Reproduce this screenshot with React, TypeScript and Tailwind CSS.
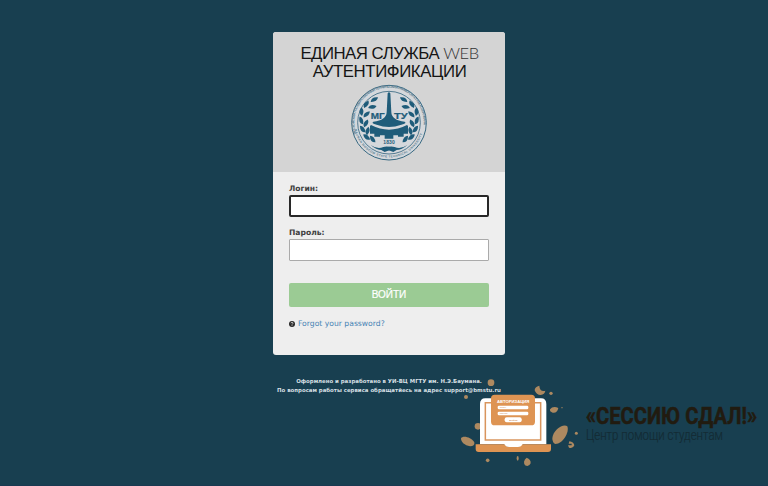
import React from "react";

const leaves: { x: number; y: number; r: number }[] = [
  { x: 103, y: 62, r: -32 },
  { x: 79, y: 76, r: -60 },
  { x: 97, y: 84, r: -15 },
  { x: 65, y: 98, r: -95 },
  { x: 80, y: 106, r: -45 },
  { x: 64, y: 124, r: -115 },
  { x: 78, y: 133, r: -65 },
  { x: 68, y: 150, r: -130 },
  { x: 83, y: 156, r: -80 },
  { x: 80, y: 174, r: -145 },
  { x: 98, y: 180, r: -130 },
];

function LaurelHalf() {
  return (
    <g fill="#1f5c7a">
      {leaves.map((l, i) => (
        <path key={i} d="M-13 0Q-3 -13 13 0Q3 11 -13 0Z" transform={`translate(${l.x} ${l.y}) rotate(${l.r})`} />
      ))}
      <path d="M92 198Q112 212 130 204Q147 198 170 213L160 219L138 211Q114 218 92 198Z" />
    </g>
  );
}

function Emblem() {
  return (
    <svg width="100" height="90" viewBox="0 0 300 270" className="block" fontFamily="Liberation Sans, sans-serif">
      <defs>
        <path id="ringTop" d="M49 165A104 104 0 1 1 245 165" />
        <path id="ringBottom" d="M44 151A105 105 0 0 0 250 151" />
      </defs>
      <circle cx="147" cy="131" r="112" fill="#d5d8dc" stroke="#376881" strokeWidth="3" />
      <circle cx="147" cy="131" r="94" fill="none" stroke="#376881" strokeWidth="2.5" />
      <text fontSize="10" fontWeight="700" fill="#53788d">
        <textPath href="#ringTop" textLength="370">МОСКОВСКИЙ ГОСУДАРСТВЕННЫЙ ТЕХНИЧЕСКИЙ УНИВЕРСИТЕТ ИМ. Н.Э.БАУМАНА</textPath>
      </text>
      <text fontSize="9" fontWeight="700" fill="#53788d">
        <textPath href="#ringBottom" textLength="275">BAUMAN MOSCOW STATE TECHNICAL UNIVERSITY</textPath>
      </text>
      <LaurelHalf />
      <g transform="translate(294 0) scale(-1 1)"><LaurelHalf /></g>
      <g fill="#1f5c7a">
        <path d="M143 43Q147 37 151 43L154 100Q155 124 194 128Q202 132 184 137Q147 151 110 137Q92 132 100 128Q139 124 140 100Z" />
        <path d="M93 138Q147 166 201 138L204 141V164H191V173H174V169H160V179H134V169H120V173H103V164H90V141Z" />
        <text x="92" y="121" fontSize="26" fontWeight="700" stroke="#1f5c7a" strokeWidth=".6" textLength="42" lengthAdjust="spacingAndGlyphs">МГ</text>
        <text x="162" y="121" fontSize="26" fontWeight="700" stroke="#1f5c7a" strokeWidth=".6" textLength="41" lengthAdjust="spacingAndGlyphs">ТУ</text>
        <text x="130" y="196" fontSize="15" fontWeight="700" textLength="34">1830</text>
      </g>
    </svg>
  );
}

function Laptop() {
  return (
    <svg width="130" height="100" viewBox="0 0 390 300" className="absolute left-[455px] top-[375px]" fontFamily="Liberation Sans, sans-serif">
      <g fill="#ad8960">
        <circle cx="108" cy="23" r="10" />
        <circle cx="33" cy="66" r="6" />
        <circle cx="69" cy="154" r="10" />
        <circle cx="98" cy="256" r="5.5" />
        <circle cx="288" cy="55" r="5" />
        <circle cx="364" cy="175" r="4.5" />
        <circle cx="321" cy="98" r="2" />
        <path d="M253 32Q239 35 239 46Q244 60 257 60Q269 58 271 47Q254 51 253 32Z" />
        <path d="M285 103Q294 92 310 99Q307 115 293 113Q284 111 285 103Z" />
        <path d="M292 190C294 165 324 145 337 154C344 171 324 207 301 207Q292 204 292 190Z" />
        <path d="M18 190C24 180 49 187 58 202Q60 214 45 214C29 211 18 202 18 190Z" />
        <path d="M343 199Q356 201 358 211Q354 222 342 218L339 211L350 211L350 206L341 206Z" />
        <path d="M215 248Q228 253 227 265Q222 277 210 271Q202 259 215 248Z" />
        <ellipse cx="188" cy="250" rx="3" ry="7" />
      </g>
      <path d="M75 208V87Q75 70 91 70H258Q274 70 274 87V208Z" fill="#fff" />
      <path d="M91 83H257V195H91Z" fill="#fff" stroke="#d9955d" strokeWidth="4.5" />
      <path d="M62 208H150Q154 216 162 216H187Q196 216 200 208H288V222Q288 231 279 231H71Q62 231 62 222Z" fill="#de9453" />
      <path d="M148 207H203Q199 216 189 216H162Q152 216 148 207Z" fill="#fff" />
      <rect x="108" y="59" width="132" height="92" rx="11" fill="#de9453" />
      <text x="126" y="83" fontSize="11" fontWeight="700" fill="#fff" textLength="97" lengthAdjust="spacingAndGlyphs">АВТОРИЗАЦИЯ</text>
      <g fill="#fff">
        <rect x="128" y="92" width="92" height="11" rx="4" />
        <rect x="128" y="110" width="92" height="11" rx="4" />
        <rect x="149" y="127" width="51" height="15" rx="6" />
      </g>
      <g fill="#d0905a" fontSize="7">
        <text x="134" y="100">Логин</text>
        <text x="134" y="118">Пароль</text>
        <text x="163" y="137" fontWeight="700">ВОЙТИ</text>
      </g>
    </svg>
  );
}

function Watermark() {
  return (
    <svg width="183" height="56" viewBox="0 0 183 56" className="absolute left-[585px] top-[394px] overflow-visible" fontFamily="Roboto, sans-serif">
      <text x="1" y="30" fontSize="24.5" fontWeight="700" fill="#211b10" stroke="#211b10" strokeWidth=".5" textLength="171" lengthAdjust="spacingAndGlyphs">«СЕССИЮ СДАЛ!»</text>
      <text x="1" y="46" fontSize="14" fontWeight="300" fill="#142b34" stroke="#142b34" strokeWidth=".2" textLength="137" lengthAdjust="spacingAndGlyphs">Центр помощи студентам</text>
    </svg>
  );
}

export default function App() {
  return (
    <div className="relative flex h-[486px] w-[768px] flex-col overflow-hidden border-b border-[#193951] bg-[#183f50] pl-[273px] pt-8 font-['DejaVu_Sans',sans-serif]">
      <main className="h-[323px] w-[232px] overflow-hidden rounded-[3px] bg-[#eee]">
        <header className="flex h-[140px] flex-col items-center bg-[#d4d4d4] pl-px pt-3">
          <h1 className="h-[35px] whitespace-nowrap text-center font-['Liberation_Sans',sans-serif] text-[16.8px] leading-[18px] text-[#151515]">
            <span className="tracking-[-0.5px]">ЕДИНАЯ СЛУЖБА </span><span className="font-['Lato',sans-serif] text-[16.5px] font-light tracking-[-0.5px] text-[#333]">WEB</span>
            <br />
            <span className="tracking-[-0.4px]">АУТЕНТИФИКАЦИИ</span>
          </h1>
          <Emblem />
        </header>
        <form className="flex flex-col px-4 pt-3 text-[8px]" onSubmit={(e) => e.preventDefault()}>
          <label htmlFor="login" className="h-[11px] text-[7.6px] font-bold leading-[10px] text-[#404040]">Логин:</label>
          <input id="login" className="h-[22px] w-[200px] rounded-[2px] border-2 border-[#282828] bg-white outline-none" />
          <label htmlFor="password" className="mt-[11px] h-[11px] text-[7.6px] font-bold leading-[10px] text-[#404040]">Пароль:</label>
          <input id="password" type="password" className="h-[22px] w-[200px] rounded-[1px] border border-[#aaa] bg-white outline-none" />
          <button className="mt-[22px] h-6 rounded-[2px] bg-[#9bcb94] font-['Liberation_Sans',sans-serif] text-[10px] leading-6 text-white [-webkit-text-stroke:0.2px_white]">ВОЙТИ</button>
          <a className="mt-[11px] flex h-3 items-center gap-[3px] whitespace-nowrap text-[7.65px] text-[#4884b5]">
            <svg width="6" height="6" viewBox="0 0 12 12">
              <circle cx="6" cy="6" r="6" fill="#292929" />
              <path d="M4 4.5C4 2 8 2 8 4.5C8 6 6 5.8 6 7.3M6 8.5V10" fill="none" stroke="#eee" strokeWidth="1.6" />
            </svg>
            Forgot your password?
          </a>
        </form>
      </main>
      <footer className="mt-[22px] w-[232px] whitespace-nowrap text-center text-[5.41px] font-bold leading-[9px] text-[#d5dfe3]">
        <p>Оформлено и разработано в УИ-ВЦ МГТУ им. Н.Э.Баумана.</p>
        <p>По вопросам работы сервиса обращатйесь на адрес support@bmstu.ru</p>
      </footer>
      <Laptop />
      <Watermark />
    </div>
  );
}
